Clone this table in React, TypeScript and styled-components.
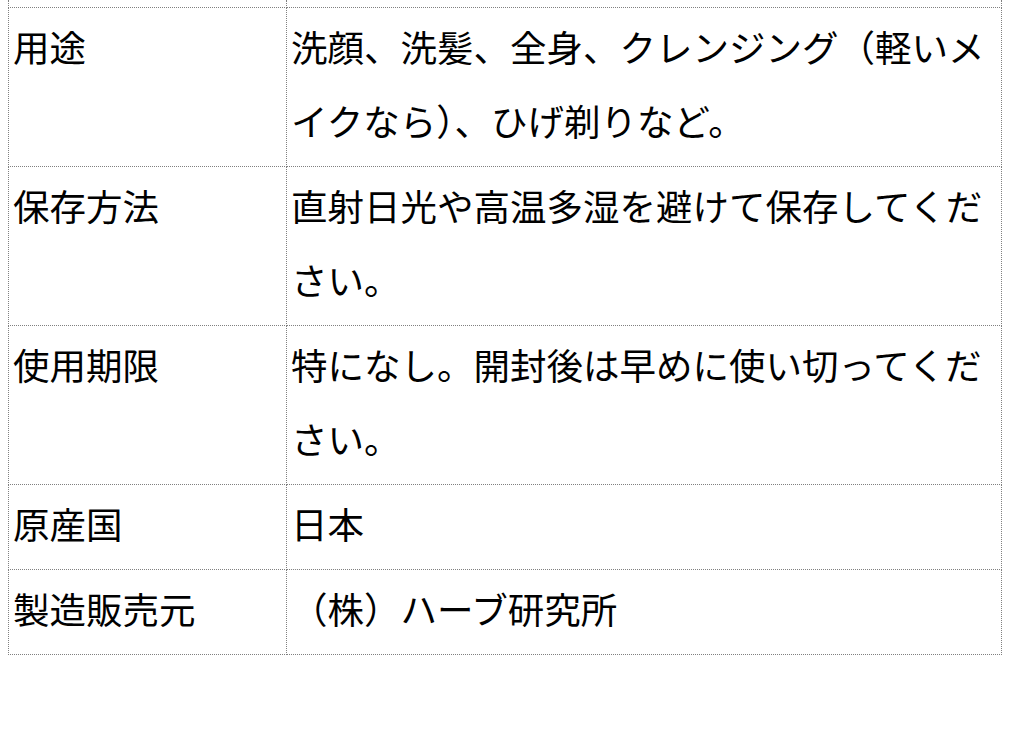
import React from "react";
import styled, { createGlobalStyle } from "styled-components";

const Global = createGlobalStyle`
  html, body {
    margin: 0;
    padding: 0;
    background: #ffffff;
  }
  body {
    font-family: "Noto Sans CJK JP", "Noto Sans", sans-serif;
    color: #000;
  }
`;

const Page = styled.div`
  padding: 0 0 8px 8px;
`;

const SpecTable = styled.table`
  width: 994px;
  border-collapse: collapse;
  table-layout: fixed;
  font-size: 36.5px;
  line-height: 74px;
`;

const LabelCol = styled.col`
  width: 278px;
`;

const Cell = styled.td<{ $spacer?: boolean }>`
  border: 1px dotted #808080;
  vertical-align: top;
  padding: ${(p) => (p.$spacer ? "0" : "2px 6px 8px 4px")};
  height: ${(p) => (p.$spacer ? "7px" : "auto")};
  line-height: ${(p) => (p.$spacer ? "0" : "74px")};
  border-top: ${(p) => (p.$spacer ? "none" : "1px dotted #808080")};
  word-break: break-all;
`;

const rows: [string, string][] = [
  ["用途", "洗顔、洗髪、全身、クレンジング（軽いメイクなら）、ひげ剃りなど。"],
  ["保存方法", "直射日光や高温多湿を避けて保存してください。"],
  ["使用期限", "特になし。開封後は早めに使い切ってください。"],
  ["原産国", "日本"],
  ["製造販売元", "（株）ハーブ研究所"],
];

export default function App() {
  return (
    <>
      <Global />
      <Page>
        <SpecTable>
          <colgroup>
            <LabelCol />
            <col />
          </colgroup>
          <tbody>
            <tr>
              <Cell $spacer />
              <Cell $spacer />
            </tr>
            {rows.map(([label, value]) => (
              <tr key={label}>
                <Cell>{label}</Cell>
                <Cell>{value}</Cell>
              </tr>
            ))}
          </tbody>
        </SpecTable>
      </Page>
    </>
  );
}
